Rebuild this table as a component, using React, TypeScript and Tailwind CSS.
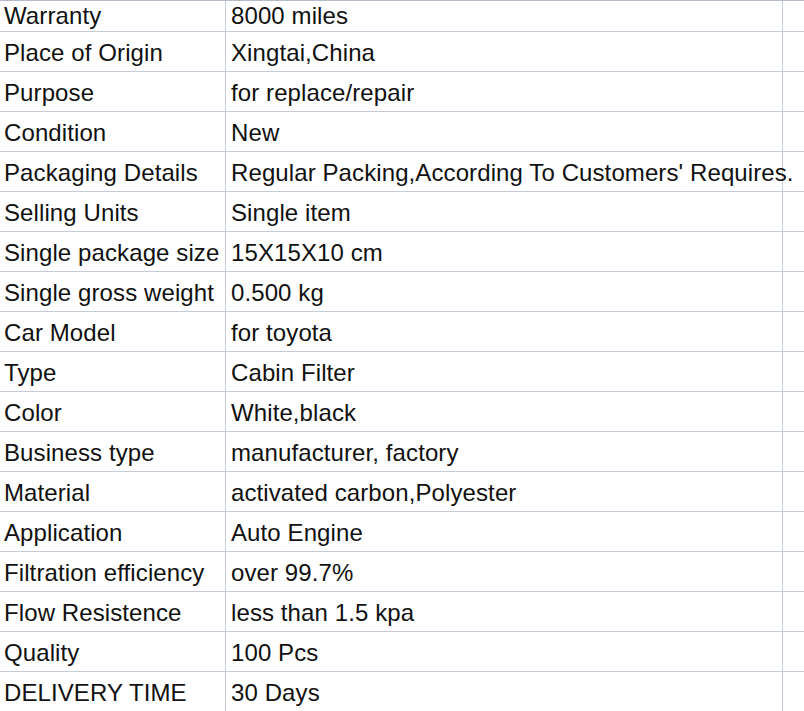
const rows: [string, string][] = [
  ['Warranty', '8000 miles'],
  ['Place of Origin', 'Xingtai,China'],
  ['Purpose', 'for replace/repair'],
  ['Condition', 'New'],
  ['Packaging Details', "Regular Packing,According To Customers' Requires."],
  ['Selling Units', 'Single item'],
  ['Single package size', '15X15X10 cm'],
  ['Single gross weight', '0.500 kg'],
  ['Car Model', 'for toyota'],
  ['Type', 'Cabin Filter'],
  ['Color', 'White,black'],
  ['Business type', 'manufacturer, factory'],
  ['Material', 'activated carbon,Polyester'],
  ['Application', 'Auto Engine'],
  ['Filtration efficiency', 'over 99.7%'],
  ['Flow Resistence', 'less than 1.5 kpa'],
  ['Quality', '100 Pcs'],
  ['DELIVERY TIME', '30 Days'],
];

export default function App() {
  return (
    <div
      className="h-[711px] w-[804px] overflow-hidden bg-white text-[24px] leading-[28px] tracking-[0.1px] text-[#111]"
      style={{ fontFamily: '"Liberation Sans", Arial, sans-serif' }}
    >
      <div className="border-t border-[#b4bccb]">
        {rows.map(([label, value], i) => (
          <div
            key={label}
            className={`grid grid-cols-[226px_557px_1fr] border-b border-[#c6cbd8] ${
              i === 0 ? 'h-[31px]' : 'h-[40px]'
            }`}
          >
            <div
              className={`whitespace-nowrap border-r border-[#c6cbd8] pl-[4px] ${
                i === 0 ? 'pt-[1px]' : 'pt-[7px]'
              }`}
            >
              {label}
            </div>
            <div
              className={`whitespace-nowrap border-r border-[#c6cbd8] pl-[5px] ${
                i === 0 ? 'pt-[1px]' : 'pt-[7px]'
              }`}
            >
              {value}
            </div>
            <div />
          </div>
        ))}
      </div>
    </div>
  );
}
